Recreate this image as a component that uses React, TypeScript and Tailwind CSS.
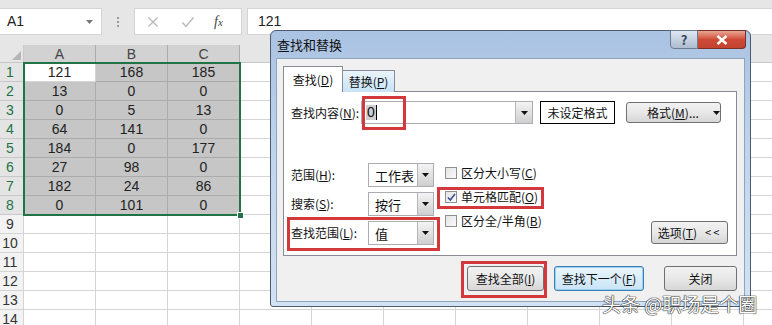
import React from 'react';

// Sheet values A1:C8
const data = [
    [121, 168, 185],
    [13, 0, 0],
    [0, 5, 13],
    [64, 141, 0],
    [184, 0, 177],
    [27, 98, 0],
    [182, 24, 86],
    [0, 101, 0],
];
const cols = ['A', 'B', 'C', 'D', 'E', 'F', 'G', 'H', 'I', 'J', 'K'];
const rows = Array.from({ length: 14 }, (_, i) => i + 1);

const cjk = "font-['Microsoft_YaHei','Noto_Sans_CJK_SC',sans-serif]";

const Arrow = () => (
    <svg width="7" height="4" viewBox="0 0 7 4">
        <path d="M0 0h7L3.5 4z" fill="#111" />
    </svg>
);

const Select: React.FC<{ value: string }> = ({ value }) => (
    <div className="w-[66px] h-[24px] bg-white border border-[#abadb3] flex items-center">
        <span className="flex-1 pl-[6px] text-[13px] text-[#111] leading-none">{value}</span>
        <div className="w-[16px] h-full border-l border-[#b5b5b5] bg-gradient-to-b from-[#f4f4f4] to-[#cfcfcf] flex items-center justify-center">
            <Arrow />
        </div>
    </div>
);

const Checkbox: React.FC<{ label: React.ReactNode; checked?: boolean }> = ({ label, checked }) => (
    <div className="h-[16px] flex items-center gap-[4px]">
        <div className="w-[12px] h-[12px] border border-[#8e8f8f] bg-gradient-to-br from-[#e4e4e4] to-[#fbfbfb] flex items-center justify-center">
            {checked && (
                <svg width="9" height="9" viewBox="0 0 9 9">
                    <path d="M1 4.5l2.3 2.5L8 1" stroke="#3c4f8e" strokeWidth="1.6" fill="none" />
                </svg>
            )}
        </div>
        <span className="text-[12px] text-[#111] leading-none">{label}</span>
    </div>
);

const Btn: React.FC<{ className?: string; children: React.ReactNode }> = ({ className = '', children }) => (
    <div className={`rounded-[3px] border border-[#707070] bg-gradient-to-b from-[#f2f2f2] via-[#e8e8e8] to-[#d6d6d6] flex items-center justify-center text-[12px] text-[#111] ${className}`}>
        {children}
    </div>
);

const RedBox: React.FC<{ className: string }> = ({ className }) => (
    <div className={`absolute border-[3px] border-[#d2383c] ${className}`} />
);

const Dialog = () => (
    <div className={`absolute left-[270px] top-[30px] w-[481px] h-[277px] whitespace-nowrap rounded-t-[6px] rounded-b-[3px] border border-[#4b5b70] bg-gradient-to-b from-[#aac3e2] via-[#c3d6ee] to-[#d3e2f3] px-[5px] pb-[4px] flex flex-col ${cjk}`}>
        {/* title bar */}
        <div className="h-[27px] flex items-start">
            <span className="pl-[1px] pt-[7px] text-[13px] text-[#111] leading-none">查找和替换</span>
            <div className="ml-auto mr-[-1px] mt-[-1px] flex">
                <div className="w-[28px] h-[19px] rounded-bl-[4px] border border-[#6b7b90] bg-gradient-to-b from-[#dfe7f1] to-[#aebcd0] flex items-center justify-center text-[13px] font-bold text-[#3a4a5e]">?</div>
                <div className="w-[48px] h-[19px] rounded-br-[4px] border border-l-0 border-[#7a3026] bg-gradient-to-b from-[#e6a593] via-[#cf4a36] to-[#c1432f] flex items-center justify-center">
                    <svg width="12" height="10" viewBox="0 0 12 10">
                        <path d="M1.5 1l9 8M10.5 1l-9 8" stroke="#fff" strokeWidth="2.4" />
                    </svg>
                </div>
            </div>
        </div>

        {/* client area */}
        <div className="flex-1 bg-[#f0f0f0] border border-[#8fa4bd] pl-[6px] pr-[7px] flex flex-col">
            {/* tabs */}
            <div className="h-[25px] mt-[8px] flex items-end relative z-10">
                <div className="w-[60px] h-[26px] bg-white border border-b-0 border-[#898c95] flex items-center justify-center text-[12px] text-[#111]">
                    查找(<u>D</u>)
                </div>
                <div className="w-[52px] h-[22px] bg-gradient-to-b from-[#eaf5fd] to-[#c7e3f7] border border-l-0 border-b-0 border-[#898c95] flex items-center justify-center text-[12px] text-[#111]">
                    替换(<u>P</u>)
                </div>
            </div>

            {/* tab panel */}
            <div className="h-[165px] bg-white border border-[#898c95] mt-[-1px] flex flex-col">
                <div className="mt-[9px] h-[23px] flex items-center">
                    <span className="w-[77px] pl-[7px] text-[12px] text-[#111]">查找内容(<u>N</u>):</span>
                    <div className="w-[172px] h-[23px] border border-[#abadb3] bg-white flex items-center">
                        <span className="ml-[4px] px-[1px] bg-[#cfcfcf] text-[14px] leading-[15px] text-[#111] font-['Liberation_Sans',sans-serif]">0</span>
                        <span className="w-px h-[15px] bg-black" />
                        <div className="ml-auto w-[17px] h-full border-l border-[#b5b5b5] bg-gradient-to-b from-[#f4f4f4] to-[#cfcfcf] flex items-center justify-center">
                            <Arrow />
                        </div>
                    </div>
                    <div className="ml-[7px] w-[75px] h-[23px] border border-black bg-white flex items-center justify-center text-[12px] text-[#111]">未设定格式</div>
                    <Btn className="ml-[11px] w-[95px] h-[21px] gap-[14px] pl-[20px]">
                        <span>格式(<u>M</u>)...</span>
                        <Arrow />
                    </Btn>
                </div>

                <div className="mt-[39px] flex">
                    <div className="flex flex-col gap-[5px] pl-[7px]">
                        <div className="h-[24px] flex items-center">
                            <span className="w-[77px] text-[12px] text-[#111]">范围(<u>H</u>):</span>
                            <Select value="工作表" />
                        </div>
                        <div className="h-[24px] flex items-center">
                            <span className="w-[77px] text-[12px] text-[#111]">搜索(<u>S</u>):</span>
                            <Select value="按行" />
                        </div>
                        <div className="h-[24px] flex items-center">
                            <span className="w-[77px] text-[12px] text-[#111]">查找范围(<u>L</u>):</span>
                            <Select value="值" />
                        </div>
                    </div>
                    <div className="ml-[11px] mt-[2px] flex flex-col gap-[8px]">
                        <Checkbox label={<>区分大小写(<u>C</u>)</>} />
                        <Checkbox label={<>单元格匹配(<u>O</u>)</>} checked />
                        <Checkbox label={<>区分全/半角(<u>B</u>)</>} />
                    </div>
                    <Btn className="ml-auto mr-[8px] mt-[58px] w-[77px] h-[23px] gap-[8px]">
                        <span>选项(<u>T</u>)</span>
                        <span className="text-[11px] tracking-[2px]">&lt;&lt;</span>
                    </Btn>
                </div>
            </div>

            {/* bottom buttons */}
            <div className="mt-[10px] flex">
                <Btn className="ml-[184px] w-[77px] h-[25px]">查找全部(<u>I</u>)</Btn>
                <div className="ml-[10px] w-[90px] h-[25px] rounded-[3px] border border-[#3c7fb1] bg-gradient-to-b from-[#eaf6fd] to-[#c9e4f6] flex items-center justify-center text-[12px] text-[#111] shadow-[inset_0_0_0_1px_#9ad1f2]">
                    查找下一个(<u>F</u>)
                </div>
                <Btn className="ml-auto w-[73px] h-[25px]">关闭</Btn>
            </div>
        </div>
    </div>
);

export default function App() {
    return (
        <div className="relative w-[772px] h-[325px] overflow-hidden bg-white font-['Liberation_Sans',sans-serif]">
            {/* formula bar */}
            <div className="h-[45px] bg-[#e6e6e6] pt-[8px] flex items-start">
                <div className="w-[102px] h-[27px] bg-white border-y border-r border-[#d4d4d4] flex items-center pl-[7px] pr-[8px] text-[14px] text-[#222]">
                    <span className="flex-1">A1</span>
                    <svg width="7" height="4" viewBox="0 0 7 4">
                        <path d="M0 0h7L3.5 4z" fill="#777" />
                    </svg>
                </div>
                <div className="w-[32px] h-[27px] flex flex-col items-center justify-center gap-[2px]">
                    <span className="w-[2px] h-[2px] bg-[#9a9a9a]" />
                    <span className="w-[2px] h-[2px] bg-[#9a9a9a]" />
                    <span className="w-[2px] h-[2px] bg-[#9a9a9a]" />
                </div>
                <div className="w-[108px] h-[27px] bg-white border border-[#d4d4d4] flex items-center">
                    <svg className="ml-[12px]" width="12" height="12" viewBox="0 0 12 12">
                        <path d="M1.5 1.5l9 9M10.5 1.5l-9 9" stroke="#b8b8b8" strokeWidth="1.3" />
                    </svg>
                    <svg className="ml-[22px]" width="14" height="12" viewBox="0 0 14 12">
                        <path d="M1.5 6.5l3.5 4L12.5 1.5" stroke="#b8b8b8" strokeWidth="1.4" fill="none" />
                    </svg>
                    <span className="ml-[19px] text-[14px] italic text-[#444] font-['Liberation_Serif',serif]">f<span className="text-[11px]">x</span></span>
                </div>
                <div className="ml-[5px] flex-1 h-[27px] bg-white border-y border-l border-[#d4d4d4] flex items-center pl-[10px] text-[14px] text-[#222]">121</div>
            </div>

            {/* grid */}
            <div className="relative">
                <div className="flex h-[18px]">
                    <div className="w-[24px] shrink-0 bg-[#e6e6e6] border-r border-b border-[#c8c8c8] flex items-end justify-end p-[2px]">
                        <svg width="9" height="9" viewBox="0 0 9 9">
                            <path d="M9 0v9H0z" fill="#b6b6b6" />
                        </svg>
                    </div>
                    {cols.map((c, i) => (
                        <div
                            key={c}
                            className={`w-[72px] shrink-0 border-r border-b flex items-center justify-center text-[14px] leading-none ${i < 3 ? 'bg-[#d2d2d2] text-[#444] border-[#ababab]' : 'bg-[#e6e6e6] text-[#444] border-[#c8c8c8]'}`}
                        >
                            {c}
                        </div>
                    ))}
                </div>
                {rows.map((r) => (
                    <div key={r} className="flex h-[19px]">
                        <div
                            className={`w-[24px] shrink-0 border-r border-b flex items-center justify-center pr-[3px] text-[14px] leading-none ${r <= 8 ? 'bg-[#e4e4e4] text-[#217346] border-[#c8c8c8]' : 'bg-[#f3f3f3] text-[#333] border-[#d4d4d4]'}`}
                        >
                            {r}
                        </div>
                        {cols.map((c, i) => {
                            const inSel = r <= 8 && i < 3;
                            const active = r === 1 && i === 0;
                            return (
                                <div
                                    key={c}
                                    className={`w-[72px] shrink-0 border-r border-b flex items-center justify-center text-[14px] leading-none text-[#222] ${active ? 'bg-white border-[#d4d4d4]' : inSel ? 'bg-[#c6c6c6] border-[#ababab]' : 'bg-white border-[#d4d4d4]'}`}
                                >
                                    {inSel ? data[r - 1][i] : ''}
                                </div>
                            );
                        })}
                    </div>
                ))}
                {/* selection outline */}
                <div className="absolute left-[23px] top-[17px] w-[218px] h-[154px] border-2 border-[#217346]" />
                <div className="absolute left-[237px] top-[167px] w-[7px] h-[7px] bg-[#217346] border border-white" />
            </div>

            <Dialog />

            {/* annotations */}
            <RedBox className="left-[362px] top-[96px] w-[44px] h-[34px]" />
            <RedBox className="left-[437px] top-[187px] w-[107px] h-[22px]" />
            <RedBox className="left-[287px] top-[217px] w-[153px] h-[34px]" />
            <RedBox className="left-[461px] top-[261px] w-[86px] h-[37px]" />

            <div className={`absolute left-[602px] top-[294px] text-[19px] leading-none text-white ${cjk} [text-shadow:0_0_1px_#222,0_0_1px_#222,0_0_1px_#222]`}>
                头条 @职场是个圈
            </div>
        </div>
    );
}
